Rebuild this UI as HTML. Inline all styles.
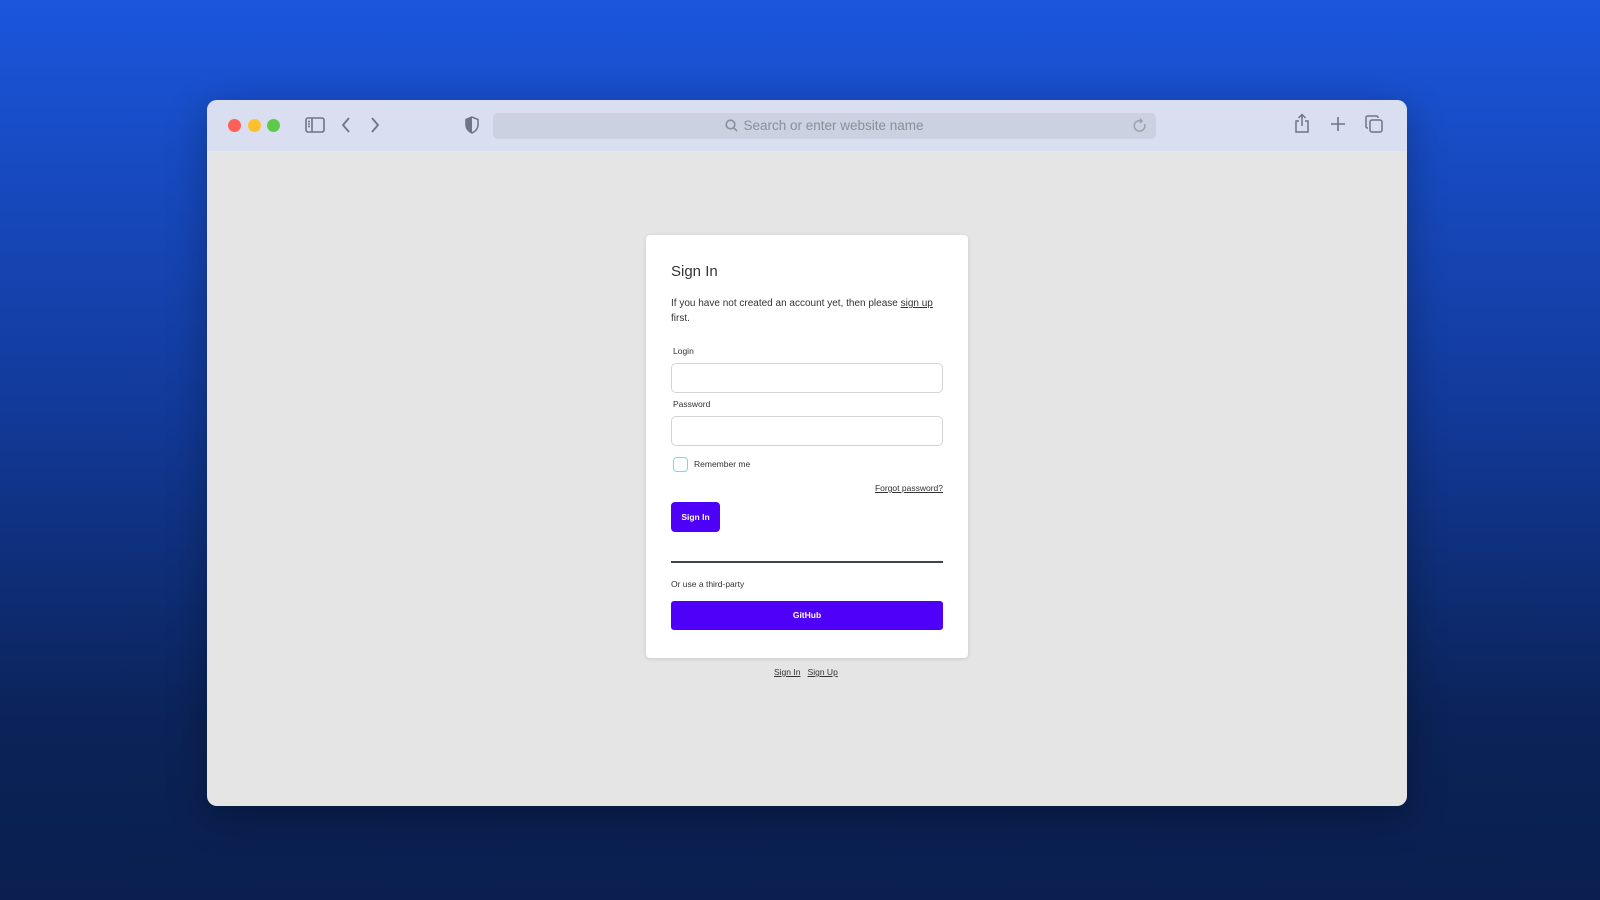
<!DOCTYPE html>
<html><head><meta charset="utf-8"><style>
*{box-sizing:border-box;margin:0;padding:0}
body{width:1600px;height:900px;overflow:hidden;background:linear-gradient(180deg,#1b56dc 0%,#123a9a 45%,#0b2358 80%,#0a1f4f 100%);font-family:"Liberation Sans",sans-serif;position:relative}
.win{position:absolute;left:207px;top:100px;width:1200px;height:706px;border-radius:10px;overflow:hidden;background:#e4e5e4;box-shadow:0 10px 40px rgba(0,0,0,.3)}
.bar{position:absolute;left:0;top:0;width:100%;height:51px;background:#d9def0}
.dot{position:absolute;top:19px;width:13px;height:13px;border-radius:50%}
.addr{position:absolute;left:286px;top:13px;width:663px;height:26px;background:#cbd1e0;border-radius:5px;color:#8a8f9c;font-size:13.5px;line-height:26px;text-align:center}
.card{position:absolute;left:439px;top:135px;width:322px;height:423px;background:#fff;border-radius:4px;box-shadow:0 1px 4px rgba(0,0,0,.12)}
.a{position:absolute;color:#333;font-size:9px}
input{position:absolute;left:25px;width:272px;height:30px;border:1px solid #d4d4d4;border-radius:5px;background:#fff}
u{text-decoration:underline}
</style></head><body>
<div class="win">
<div class="bar">
<div class="dot" style="left:21px;background:#fe5f57"></div>
<div class="dot" style="left:41px;background:#fdc12f"></div>
<div class="dot" style="left:60px;background:#5ccb49"></div>
<svg style="position:absolute;left:98px;top:16px" width="20" height="18" viewBox="0 0 20 18" fill="none" stroke="#6f7585" stroke-width="1.6"><rect x="1" y="2" width="18" height="14" rx="2"/><line x1="7" y1="2" x2="7" y2="16"/><line x1="3" y1="5.5" x2="5" y2="5.5"/><line x1="3" y1="8" x2="5" y2="8"/><line x1="3" y1="10.5" x2="5" y2="10.5"/></svg>
<svg style="position:absolute;left:133px;top:16px" width="12" height="18" fill="none" stroke="#6f7585" stroke-width="1.8"><path d="M9 2 3 9l6 7"/></svg>
<svg style="position:absolute;left:162px;top:16px" width="12" height="18" fill="none" stroke="#6f7585" stroke-width="1.8"><path d="M3 2l6 7-6 7"/></svg>
<svg style="position:absolute;left:258px;top:16px" width="14" height="18" viewBox="0 0 14 18"><path d="M7 1 1 3.5V9c0 4 3 6.5 6 8 3-1.5 6-4 6-8V3.5Z" fill="none" stroke="#6f7585" stroke-width="1.5"/><path d="M7 1 1 3.5V9c0 4 3 6.5 6 8Z" fill="#6f7585"/></svg>
<div class="addr"><svg style="vertical-align:-2px;margin-right:5px" width="13" height="13" fill="none" stroke="#8a8f9c" stroke-width="1.6"><circle cx="5.5" cy="5.5" r="4.3"/><path d="M8.7 8.7 12 12"/></svg>Search or enter website name
<svg style="position:absolute;right:8px;top:5px" width="16" height="16" fill="none" stroke="#9aa0ad" stroke-width="1.5"><path d="M12.5 6A5.3 5.3 0 1 1 9 2.8"/><path d="M8 0.8 10 3 7.8 4.8"/></svg></div>
<svg style="position:absolute;left:1087px;top:13px" width="16" height="21" fill="none" stroke="#6f7585" stroke-width="1.5"><path d="M5 8H2v11h12V8h-3M8 13V2M4.5 5 8 1.5 11.5 5"/></svg>
<svg style="position:absolute;left:1124px;top:17px" width="14" height="14" stroke="#6f7585" stroke-width="1.6"><path d="M7 0v14M0 7h14"/></svg>
<svg style="position:absolute;left:1158px;top:15px" width="18" height="18" fill="none" stroke="#6f7585" stroke-width="1.5"><rect x="5" y="5" width="12" height="12" rx="2"/><path d="M3 13H2.5A1.5 1.5 0 0 1 1 11.5v-9A1.5 1.5 0 0 1 2.5 1h9A1.5 1.5 0 0 1 13 2.5V3"/></svg>
</div>
<div class="card">
<div class="a" style="left:25px;top:28px;font-size:15px;color:#333">Sign In</div>
<div class="a" style="left:25px;top:61px;font-size:10px;line-height:15px;width:285px">If you have not created an account yet, then please <u>sign up</u><br>first.</div>
<div class="a" style="left:27px;top:111px;font-size:8.5px">Login</div>
<input style="top:128px">
<div class="a" style="left:27px;top:164px;font-size:8.5px">Password</div>
<input style="top:181px">
<div style="position:absolute;left:27px;top:222px;width:15px;height:15px;border:1.5px solid #6ee1d9;border-radius:4px"></div>
<div class="a" style="left:48px;top:224px;font-size:8.5px">Remember me</div>
<div class="a" style="right:25px;top:248px;font-size:8.5px"><u>Forgot password?</u></div>
<div style="position:absolute;left:25px;top:267px;width:49px;height:30px;background:#4f00f9;border-radius:4px;color:#fff;font-size:8.5px;font-weight:bold;text-align:center;line-height:30px">Sign In</div>
<div style="position:absolute;left:25px;top:326px;width:272px;height:2px;background:#3e4351"></div>
<div class="a" style="left:25px;top:344px;font-size:8.5px">Or use a third-party</div>
<div style="position:absolute;left:25px;top:366px;width:272px;height:29px;background:#4f00f9;border-radius:3px;color:#fff;font-size:8.5px;font-weight:bold;text-align:center;line-height:29px">GitHub</div>
</div>
<div class="a" style="left:567px;top:567px;font-size:8.5px"><u>Sign In</u>&nbsp;&nbsp; <u>Sign Up</u></div>
</div>
</body></html>
